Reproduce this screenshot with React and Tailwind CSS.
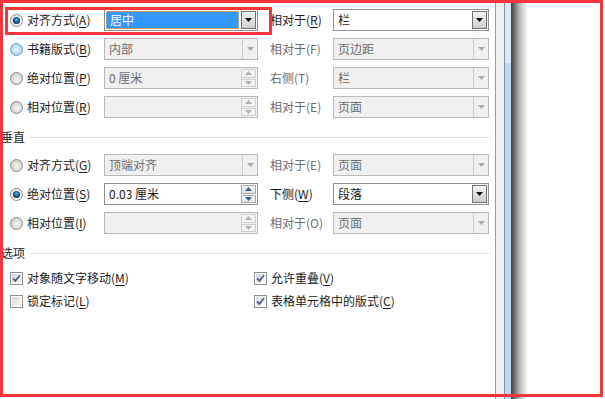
import React from 'react';

const FONT = { fontFamily: '"Noto Sans CJK SC", "Microsoft YaHei", sans-serif' };

const Acc = ({ text, k, disabled }) => (
  <span className={disabled ? 'text-[#6d6d6d]' : 'text-[#1b1b1b]'}>
    {text}(
    {disabled ? k : <span className="underline underline-offset-[2px]">{k}</span>})
  </span>
);

const Radio = ({ state = 'off' }) => {
  if (state === 'on')
    return (
      <svg width="13" height="13" viewBox="0 0 13 13" className="shrink-0">
        <defs>
          <radialGradient id="rOn" cx="50%" cy="40%" r="60%">
            <stop offset="0%" stopColor="#5fb4ee" />
            <stop offset="55%" stopColor="#1d5f93" />
            <stop offset="100%" stopColor="#0c2f4f" />
          </radialGradient>
          <linearGradient id="rRing" x1="0" y1="0" x2="1" y2="1">
            <stop offset="0%" stopColor="#e2e2e2" />
            <stop offset="100%" stopColor="#fbfbfb" />
          </linearGradient>
        </defs>
        <circle cx="6.5" cy="6.5" r="6" fill="url(#rRing)" stroke="#8a8c8e" />
        <circle cx="6.5" cy="6.5" r="3.6" fill="url(#rOn)" />
      </svg>
    );
  if (state === 'hover')
    return (
      <svg width="13" height="13" viewBox="0 0 13 13" className="shrink-0">
        <defs>
          <radialGradient id="rHov" cx="50%" cy="50%" r="55%">
            <stop offset="0%" stopColor="#eaf6fe" />
            <stop offset="100%" stopColor="#9ccff2" />
          </radialGradient>
        </defs>
        <circle cx="6.5" cy="6.5" r="6" fill="url(#rHov)" stroke="#6f9cc0" />
      </svg>
    );
  return (
    <svg width="13" height="13" viewBox="0 0 13 13" className="shrink-0">
      <defs>
        <radialGradient id="rOff" cx="55%" cy="55%" r="60%">
          <stop offset="0%" stopColor="#f6f6f6" />
          <stop offset="100%" stopColor="#c9c9c9" />
        </radialGradient>
      </defs>
      <circle cx="6.5" cy="6.5" r="6" fill="url(#rOff)" stroke="#8a8c8e" />
    </svg>
  );
};

const Check = ({ checked }) => (
  <svg width="13" height="13" viewBox="0 0 13 13" className="shrink-0">
    <defs>
      <linearGradient id="cbIn" x1="0" y1="0" x2="1" y2="1">
        <stop offset="0%" stopColor="#d6d6d6" />
        <stop offset="100%" stopColor="#fafafa" />
      </linearGradient>
    </defs>
    <rect x="0.5" y="0.5" width="12" height="12" fill="#fff" stroke="#8e8f8f" />
    <rect x="2" y="2" width="9" height="9" fill="url(#cbIn)" />
    {checked && (
      <path d="M3 6.4 L5.4 8.9 L10 3.3" fill="none" stroke="#4b5d8f" strokeWidth="1.7" />
    )}
  </svg>
);

const Tri = ({ color, up, w = 7, h = 4 }) => (
  <svg width={w} height={h} viewBox={`0 0 ${w} ${h}`}>
    <path d={up ? `M0 ${h} L${w / 2} 0 L${w} ${h}Z` : `M0 0 L${w} 0 L${w / 2} ${h}Z`} fill={color} />
  </svg>
);

const Combo = ({ value, disabled, focused, width = 'w-[154px]' }) => (
  <div
    className={`${width} h-[22px] flex border ${
      disabled ? 'border-[#b9b9b9] bg-[#f0f0f0]' : 'border-[#8f8f8f] bg-white'
    }`}
  >
    <div className="flex-1 flex items-center px-[1px]">
      {focused ? (
        <div className="flex-1 h-[18px] bg-[#3399ff] border border-dotted border-[#e6b47a] text-white flex items-center pl-[3px] leading-none">
          {value}
        </div>
      ) : (
        <span className={`pl-[3px] leading-none ${disabled ? 'text-[#6d6d6d]' : 'text-[#1b1b1b]'}`}>{value}</span>
      )}
    </div>
    {disabled ? (
      <div className="w-[15px] border-l border-[#c9c9c9] flex items-center justify-center">
        <Tri color="#a9a9a9" />
      </div>
    ) : (
      <div className="w-[17px] p-[1px]">
        <div className="h-full border border-[#707070] bg-gradient-to-b from-[#f4f4f4] to-[#cdcdcd] flex items-center justify-center">
          <Tri color="#111" />
        </div>
      </div>
    )}
  </div>
);

const Spin = ({ value, disabled }) => (
  <div
    className={`w-[154px] h-[22px] flex border ${
      disabled ? 'border-[#b9b9b9] bg-[#f0f0f0]' : 'border-[#8f8f8f] bg-white'
    }`}
  >
    <div className="flex-1 flex items-center">
      <span className={`pl-[4px] leading-none ${disabled ? 'text-[#6d6d6d]' : 'text-[#1b1b1b]'}`}>{value}</span>
    </div>
    <div className="w-[16px] flex flex-col py-[1px] pr-[1px] gap-[1px]">
      {[true, false].map((up) => (
        <div
          key={String(up)}
          className={`flex-1 flex items-center justify-center border ${
            disabled ? 'border-[#cfcfcf] bg-[#f3f3f3]' : 'border-[#a8a8a8] bg-gradient-to-b from-[#fafafa] to-[#e2e2e2]'
          }`}
        >
          <Tri color={disabled ? '#b0b0b0' : '#3a5a93'} up={up} w={7} h={4} />
        </div>
      ))}
    </div>
  </div>
);

const Row = ({ radio, label, k, field, rLabel, rk, rDisabled, rField }) => (
  <div className="flex items-center h-[22px]">
    <div className="w-[104px] flex items-center pl-[10px] gap-[4px]">
      <Radio state={radio} />
      <Acc text={label} k={k} />
    </div>
    {field}
    <div className="w-[63px] ml-[12px]">
      <Acc text={rLabel} k={rk} disabled={rDisabled} />
    </div>
    {rField}
  </div>
);

const Header = ({ text }) => (
  <div className="flex items-center h-[16px]">
    <span className="pl-[1px] text-[#1b1b1b]">{text}</span>
    <div className="ml-[5px] w-[460px] h-px bg-[#dde3ea]" />
  </div>
);

const CheckItem = ({ checked, label, k }) => (
  <div className="flex items-center gap-[4px]">
    <Check checked={checked} />
    <Acc text={label} k={k} />
  </div>
);

export default function App() {
  return (
    <div className="relative w-[605px] h-[399px] bg-white overflow-hidden text-[12px]" style={FONT}>
      <div className="flex h-full">
        <div className="w-[496px] h-full border-r border-[#9c9c9c] flex flex-col pt-[9px]">
          <div className="flex flex-col gap-[7px]">
            <Row
              radio="on"
              label="对齐方式"
              k="A"
              field={<Combo value="居中" focused />}
              rLabel="相对于"
              rk="R"
              rField={<Combo value="栏" width="w-[156px]" />}
            />
            <Row
              radio="hover"
              label="书籍版式"
              k="B"
              field={<Combo value="内部" disabled />}
              rLabel="相对于"
              rk="F"
              rDisabled
              rField={<Combo value="页边距" disabled width="w-[156px]" />}
            />
            <Row
              label="绝对位置"
              k="P"
              field={<Spin value="0 厘米" disabled />}
              rLabel="右侧"
              rk="T"
              rDisabled
              rField={<Combo value="栏" disabled width="w-[156px]" />}
            />
            <Row
              label="相对位置"
              k="R"
              field={<Spin value="" disabled />}
              rLabel="相对于"
              rk="E"
              rDisabled
              rField={<Combo value="页面" disabled width="w-[156px]" />}
            />
          </div>

          <div className="mt-[11px]">
            <Header text="垂直" />
          </div>

          <div className="mt-[9px] flex flex-col gap-[7px]">
            <Row
              label="对齐方式"
              k="G"
              field={<Combo value="顶端对齐" disabled />}
              rLabel="相对于"
              rk="E"
              rDisabled
              rField={<Combo value="页面" disabled width="w-[156px]" />}
            />
            <Row
              radio="on"
              label="绝对位置"
              k="S"
              field={<Spin value="0.03 厘米" />}
              rLabel="下侧"
              rk="W"
              rField={<Combo value="段落" width="w-[156px]" />}
            />
            <Row
              label="相对位置"
              k="I"
              field={<Spin value="" disabled />}
              rLabel="相对于"
              rk="O"
              rDisabled
              rField={<Combo value="页面" disabled width="w-[156px]" />}
            />
          </div>

          <div className="mt-[11px]">
            <Header text="选项" />
          </div>

          <div className="mt-[7px] grid grid-cols-[244px_1fr] gap-y-[3px] pl-[10px]">
            <div className="h-[20px] flex items-center">
              <CheckItem checked label="对象随文字移动" k="M" />
            </div>
            <div className="h-[20px] flex items-center">
              <CheckItem checked label="允许重叠" k="V" />
            </div>
            <div className="h-[20px] flex items-center">
              <CheckItem label="锁定标记" k="L" />
            </div>
            <div className="h-[20px] flex items-center">
              <CheckItem checked label="表格单元格中的版式" k="C" />
            </div>
          </div>
        </div>

        <div className="w-[8px] h-full bg-[#f0f0f0]" />
        <div className="w-px h-full bg-[#8193a6]" />
        <div className="w-[6px] h-full flex flex-col">
          <div className="h-[63px] bg-[#dbe9f7]" />
          <div className="flex-1 bg-[#bcd8f5]" />
        </div>
        <div className="w-[17px] h-full bg-gradient-to-r from-[#3f3f3f] via-[#b8b8b8] to-white" />
      </div>

      {/* annotation frames */}
      <div className="absolute left-0 top-0 w-[603px] h-[397px] border-[3px] border-[#f4363c] pointer-events-none" />
      <div className="absolute left-[5px] top-[7px] w-[267px] h-[28px] border-[3px] border-[#f4363c] pointer-events-none" />
    </div>
  );
}
